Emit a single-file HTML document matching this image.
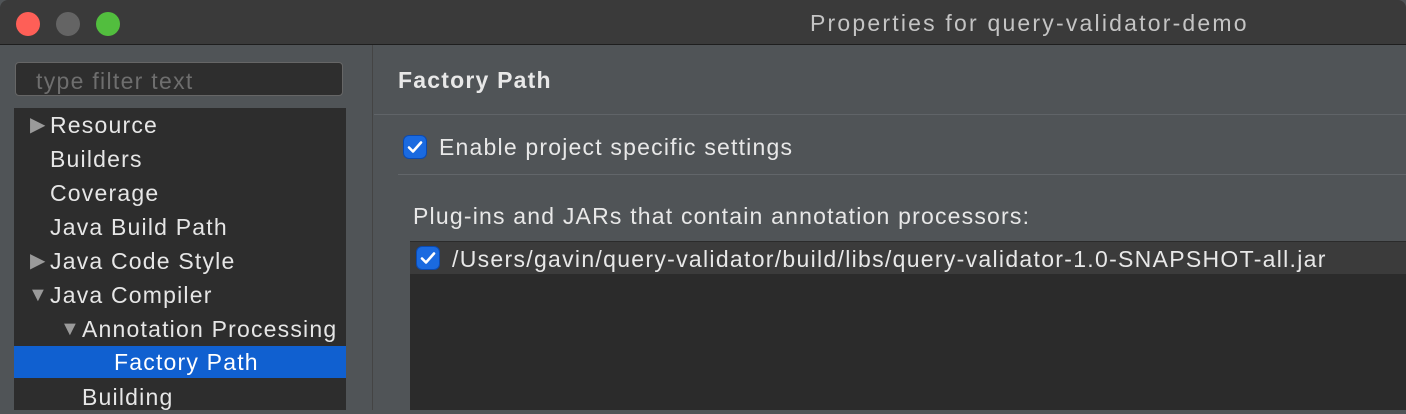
<!DOCTYPE html>
<html><head><style>
body{margin:0;width:1406px;height:410px;overflow:hidden;background:#505457;font-family:"Liberation Sans",sans-serif;position:relative}
.tb{position:absolute;left:0;top:0;width:1406px;height:44px;background:#3a3a3a;border-bottom:1px solid #1e1e1e;border-radius:8px 8px 0 0}
.dot{position:absolute;top:12px;width:24px;height:24px;border-radius:50%}
.title{position:absolute;left:810px;top:10px;font-size:23px;color:#c4c4c4;letter-spacing:2.2px}
.a{position:absolute}
.filter{left:15px;top:62px;width:328px;height:34px;background:#2e2e2e;border:1px solid #666;border-radius:4px;box-sizing:border-box;color:#6e6e6e;font-size:23px;padding:5px 0 0 20px;letter-spacing:1.3px}
.tree{left:14px;top:108px;width:332px;height:302px;background:#2d2d2d}
.row{position:absolute;left:0;width:332px;height:34px;color:#e6e6e6;font-size:23px;line-height:34px;letter-spacing:1.2px}
.tri{position:absolute;top:0;color:#9a9a9a;font-size:20px;letter-spacing:0}
.sel{background:#1060d0;color:#fff}
.vline{left:372px;top:45px;width:1px;height:365px;background:#444}
.hdr{left:398px;top:67px;font-size:23px;font-weight:bold;color:#e8e8e8;letter-spacing:1.2px}
.hsep{left:374px;top:114px;width:1032px;height:1px;background:#606468}
.cb{width:22px;height:22px;border-radius:5px;background:#1a6ae0;box-shadow:0 0 0 1px #0b4ab0}
.txt{font-size:23px;color:#e8e8e8;letter-spacing:1.2px}
</style></head><body>
<div class="tb">
<div class="dot" style="left:16px;background:#fe5f57"></div>
<div class="dot" style="left:56px;background:#646464"></div>
<div class="dot" style="left:96px;background:#52be3e"></div>
<div class="title">Properties for query-validator-demo</div>
</div>
<div class="a filter">type filter text</div>
<div class="a tree">
<div class="row" style="top:0"><span class="tri" style="left:16px">▶</span><span style="position:absolute;left:36px">Resource</span></div>
<div class="row" style="top:34px"><span style="position:absolute;left:36px">Builders</span></div>
<div class="row" style="top:68px"><span style="position:absolute;left:36px">Coverage</span></div>
<div class="row" style="top:102px"><span style="position:absolute;left:36px">Java Build Path</span></div>
<div class="row" style="top:136px"><span class="tri" style="left:16px">▶</span><span style="position:absolute;left:36px">Java Code Style</span></div>
<div class="row" style="top:170px"><span class="tri" style="left:14px">▼</span><span style="position:absolute;left:36px">Java Compiler</span></div>
<div class="row" style="top:204px"><span class="tri" style="left:46px">▼</span><span style="position:absolute;left:68px">Annotation Processing</span></div>
<div class="row sel" style="top:238px;height:32px;line-height:32px"><span style="position:absolute;left:100px">Factory Path</span></div>
<div class="row" style="top:272px"><span style="position:absolute;left:68px">Building</span></div>
</div>
<div class="a vline"></div>
<div class="a hdr">Factory Path</div>
<div class="a hsep"></div>
<div class="a cb" style="left:404px;top:136px"><svg width="22" height="22"><path d="M5 11.5l4 4 8-9" stroke="#fff" stroke-width="2.6" fill="none" stroke-linecap="round" stroke-linejoin="round"/></svg></div>
<div class="a txt" style="left:439px;top:134px">Enable project specific settings</div>
<div class="a" style="left:398px;top:174px;width:1008px;height:1px;background:#62666a"></div>
<div class="a txt" style="left:413px;top:203px">Plug-ins and JARs that contain annotation processors:</div>
<div class="a" style="left:410px;top:241px;width:996px;height:169px;background:#2b2b2b"></div>
<div class="a" style="left:410px;top:242px;width:996px;height:32px;background:#3b3b3b"></div>
<div class="a cb" style="left:417px;top:247px"><svg width="22" height="22"><path d="M5 11.5l4 4 8-9" stroke="#fff" stroke-width="2.6" fill="none" stroke-linecap="round" stroke-linejoin="round"/></svg></div>
<div class="a txt" style="left:452px;top:246px;letter-spacing:1.3px">/Users/gavin/query-validator/build/libs/query-validator-1.0-SNAPSHOT-all.jar</div>
</body></html>
